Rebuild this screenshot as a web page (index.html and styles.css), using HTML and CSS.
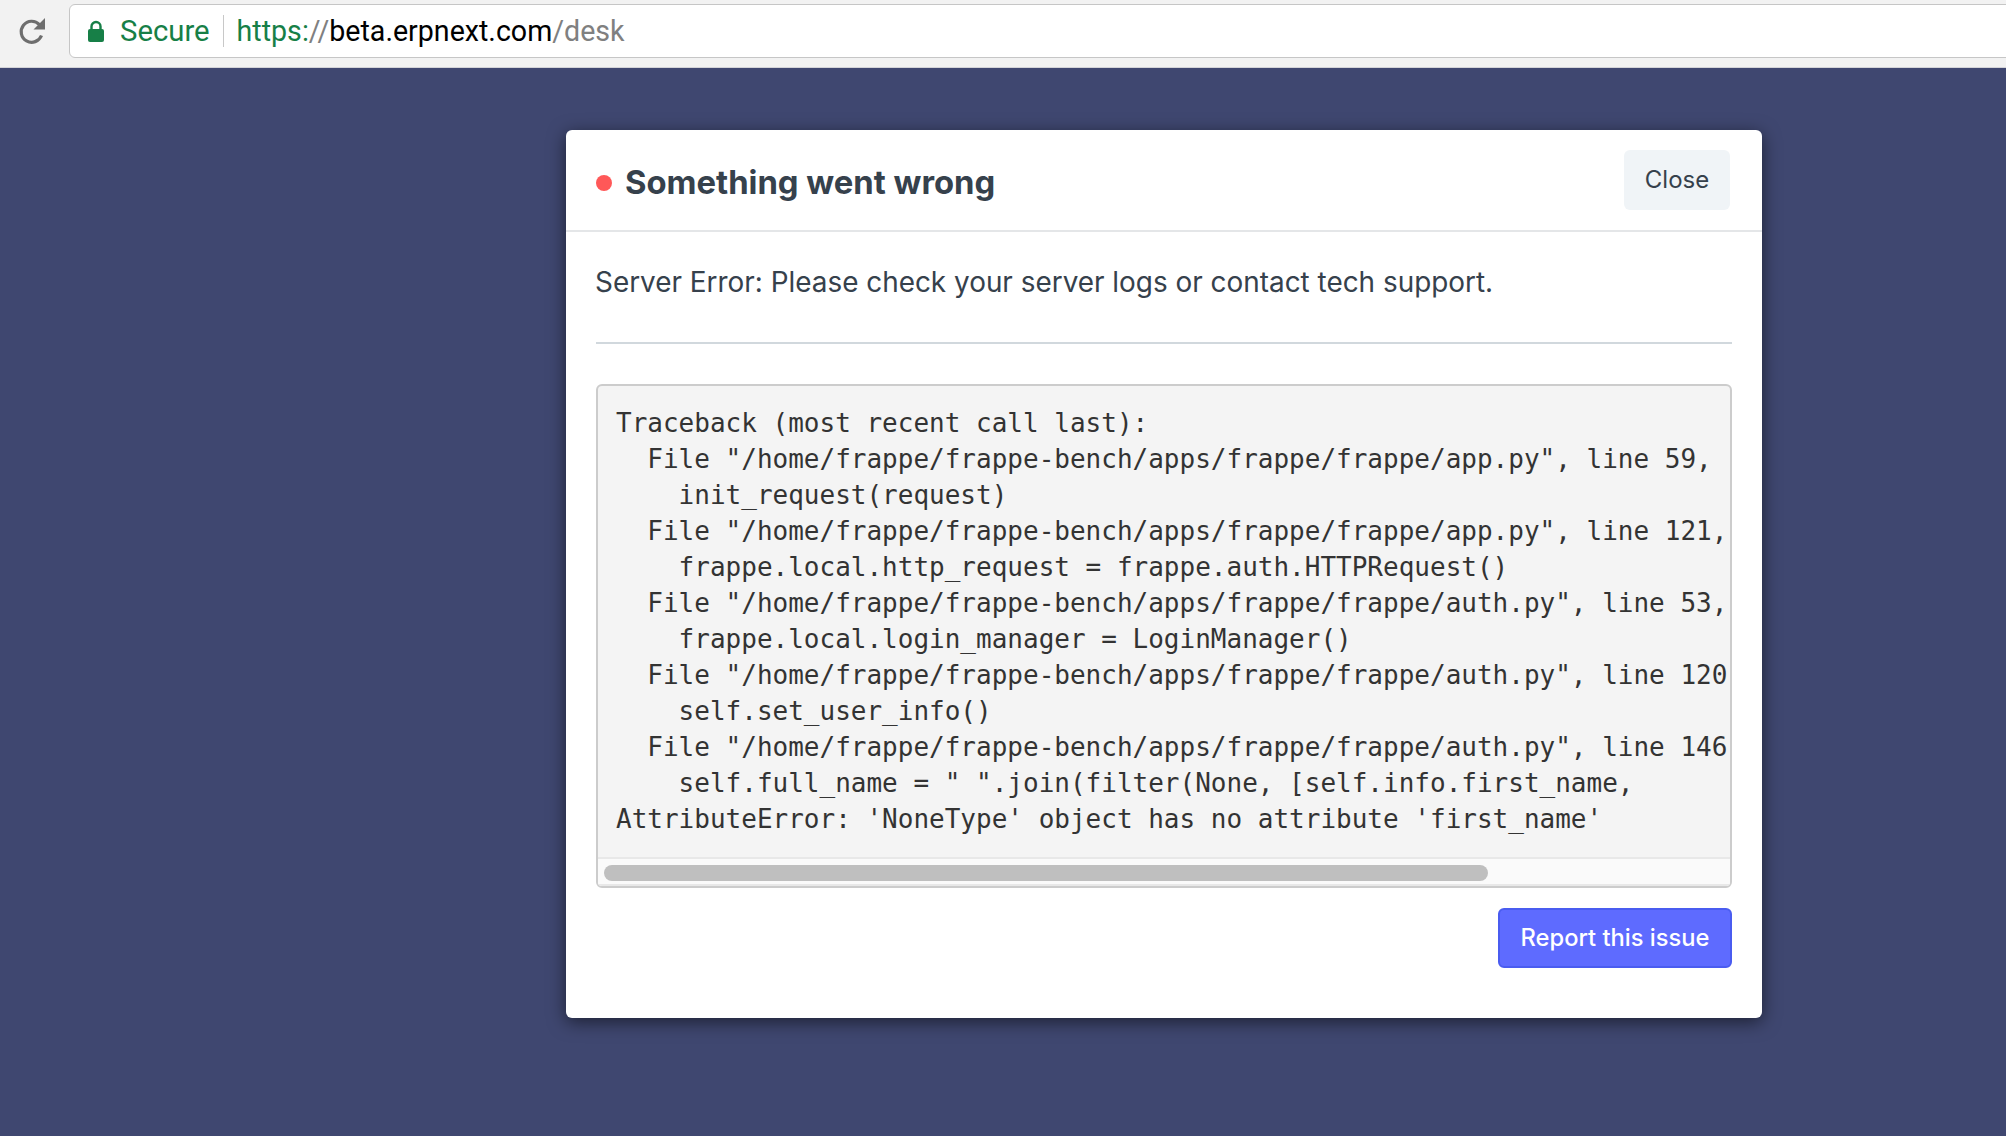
FILE: index.html
```html
<!DOCTYPE html>
<html lang="en">
<head>
<meta charset="utf-8">
<title>Something went wrong</title>
<link rel="stylesheet" href="styles.css">
</head>
<body>
<header class="toolbar">
  <svg class="reload" width="30" height="30" viewBox="0 0 30 30"><path d="M24.5 18.5A10.5 10.5 0 1 1 22.4 7.6" fill="none" stroke="#6e6e6e" stroke-width="3.2"/><path d="M16.5 12.5h11.5V1z" fill="#6e6e6e"/></svg>
  <div class="omnibox">
    <svg class="lock" width="18" height="22" viewBox="0 0 18 22"><path d="M4.5 10V6.5a4.5 4.5 0 0 1 9 0V10" fill="none" stroke="#177f47" stroke-width="2.4"/><rect x="1" y="9" width="16" height="13" rx="2" fill="#177f47"/></svg>
    <span class="secure">Secure</span>
    <span class="url"><span class="scheme">https:</span><span class="slash">//</span><span class="host">beta.erpnext.com</span><span class="slash">/desk</span></span>
  </div>
</header>
<main class="stage">
  <section class="modal">
    <div class="modal-header">
      <span class="dot"></span>
      <h4 class="modal-title">Something went wrong</h4>
      <button class="btn-close">Close</button>
    </div>
    <div class="modal-body">
      <p class="message">Server Error: Please check your server logs or contact tech support.</p>
      <hr class="rule">
      <div class="trace-box">
        <pre class="trace">Traceback (most recent call last):
  File "/home/frappe/frappe-bench/apps/frappe/frappe/app.py", line 59, in application
    init_request(request)
  File "/home/frappe/frappe-bench/apps/frappe/frappe/app.py", line 121, in init_request
    frappe.local.http_request = frappe.auth.HTTPRequest()
  File "/home/frappe/frappe-bench/apps/frappe/frappe/auth.py", line 53, in __init__
    frappe.local.login_manager = LoginManager()
  File "/home/frappe/frappe-bench/apps/frappe/frappe/auth.py", line 120, in __init__
    self.set_user_info()
  File "/home/frappe/frappe-bench/apps/frappe/frappe/auth.py", line 146, in set_user_info
    self.full_name = " ".join(filter(None, [self.info.first_name,
AttributeError: 'NoneType' object has no attribute 'first_name'</pre>
        <div class="scrollbar"><div class="thumb"></div></div>
      </div>
      <div class="actions"><button class="btn-report">Report this issue</button></div>
    </div>
  </section>
</main>
</body>
</html>
```
FILE: styles.css
```css
* { box-sizing: border-box; }
html, body { margin: 0; height: 100%; overflow: hidden; }
body { background: #3f4770; display: flex; flex-direction: column; font-family: Inter, "Liberation Sans", sans-serif; }
.toolbar { height: 68px; flex: none; background: #f2f2f2; border-bottom: 1px solid #d4d4d8; display: flex; align-items: center; padding: 0 0 0 17px; gap: 22px; }
.reload { flex: none; margin-top: -4px; }
.omnibox { flex: 1; margin-right: -10px; height: 54px; margin-top: -5px; background: #fff; border: 1px solid #c6c6c6; border-radius: 6px; display: flex; align-items: center; padding-left: 17px; font-family: Roboto, "Liberation Sans", sans-serif; font-size: 28.6px; }
.lock { flex: none; margin-right: 15px; }
.secure { color: #177f47; padding-right: 13px; border-right: 1px solid #c8c8c8; line-height: 32px; font-size: 29.3px; }
.url { padding-left: 13px; color: #777; }
.scheme { color: #177f47; }
.slash { color: #808080; }
.host { color: #000; }
.stage { flex: 1; padding: 62px 0 0 566px; }
.modal { width: 1196px; height: 888px; background: #fff; border-radius: 6px; box-shadow: 0 4px 18px rgba(0,0,0,.55); }
.modal-header { height: 102px; border-bottom: 2px solid #e4e6e8; display: flex; align-items: center; padding: 0 32px 0 30px; }
.dot { width: 16px; height: 16px; border-radius: 50%; background: #ff5858; flex: none; margin: 6px 13px 0 0; }
.modal-title { flex: 1; margin: 4px 0 0; font-size: 32.8px; font-weight: 700; color: #36414c; }
.btn-close { width: 106px; height: 60px; padding-bottom: 2px; border: 0; border-radius: 6px; background: #f0f4f7; color: #36414c; font: 400 24px Inter, "Liberation Sans", sans-serif; }
.modal-body { padding: 0 30px; }
.message { margin: 0 0 0 -1px; padding-top: 28px; font-size: 27.9px; line-height: 44px; color: #36414c; }
.rule { margin: 38px 0 0; border: 0; border-top: 2px solid #d1d8dd; }
.trace-box { margin-top: 40px; height: 504px; display: flex; flex-direction: column; overflow: hidden; background: #f4f4f4; border: 2px solid #ccc; border-radius: 6px; }
.trace { flex: 1; margin: 0 3px 0 0; overflow: hidden; padding: 19px 0 0 18px; font: 26px/36px "DejaVu Sans Mono", monospace; color: #333; }
.scrollbar { flex: none; height: 29px; padding: 6px 0 0 6px; background: #fafafa; border-top: 2px solid #e8e8e8; border-bottom: 2px solid #e8e8e8; }
.thumb { width: 884px; height: 16px; border-radius: 8px; background: #bfbfbf; }
.actions { display: flex; justify-content: flex-end; margin-top: 20px; }
.btn-report { width: 234px; height: 60px; padding-bottom: 2px; border: 2px solid #4a5cf0; border-radius: 6px; background: #5e6bff; color: #fff; font: 500 23.7px Inter, "Liberation Sans", sans-serif; }
```
